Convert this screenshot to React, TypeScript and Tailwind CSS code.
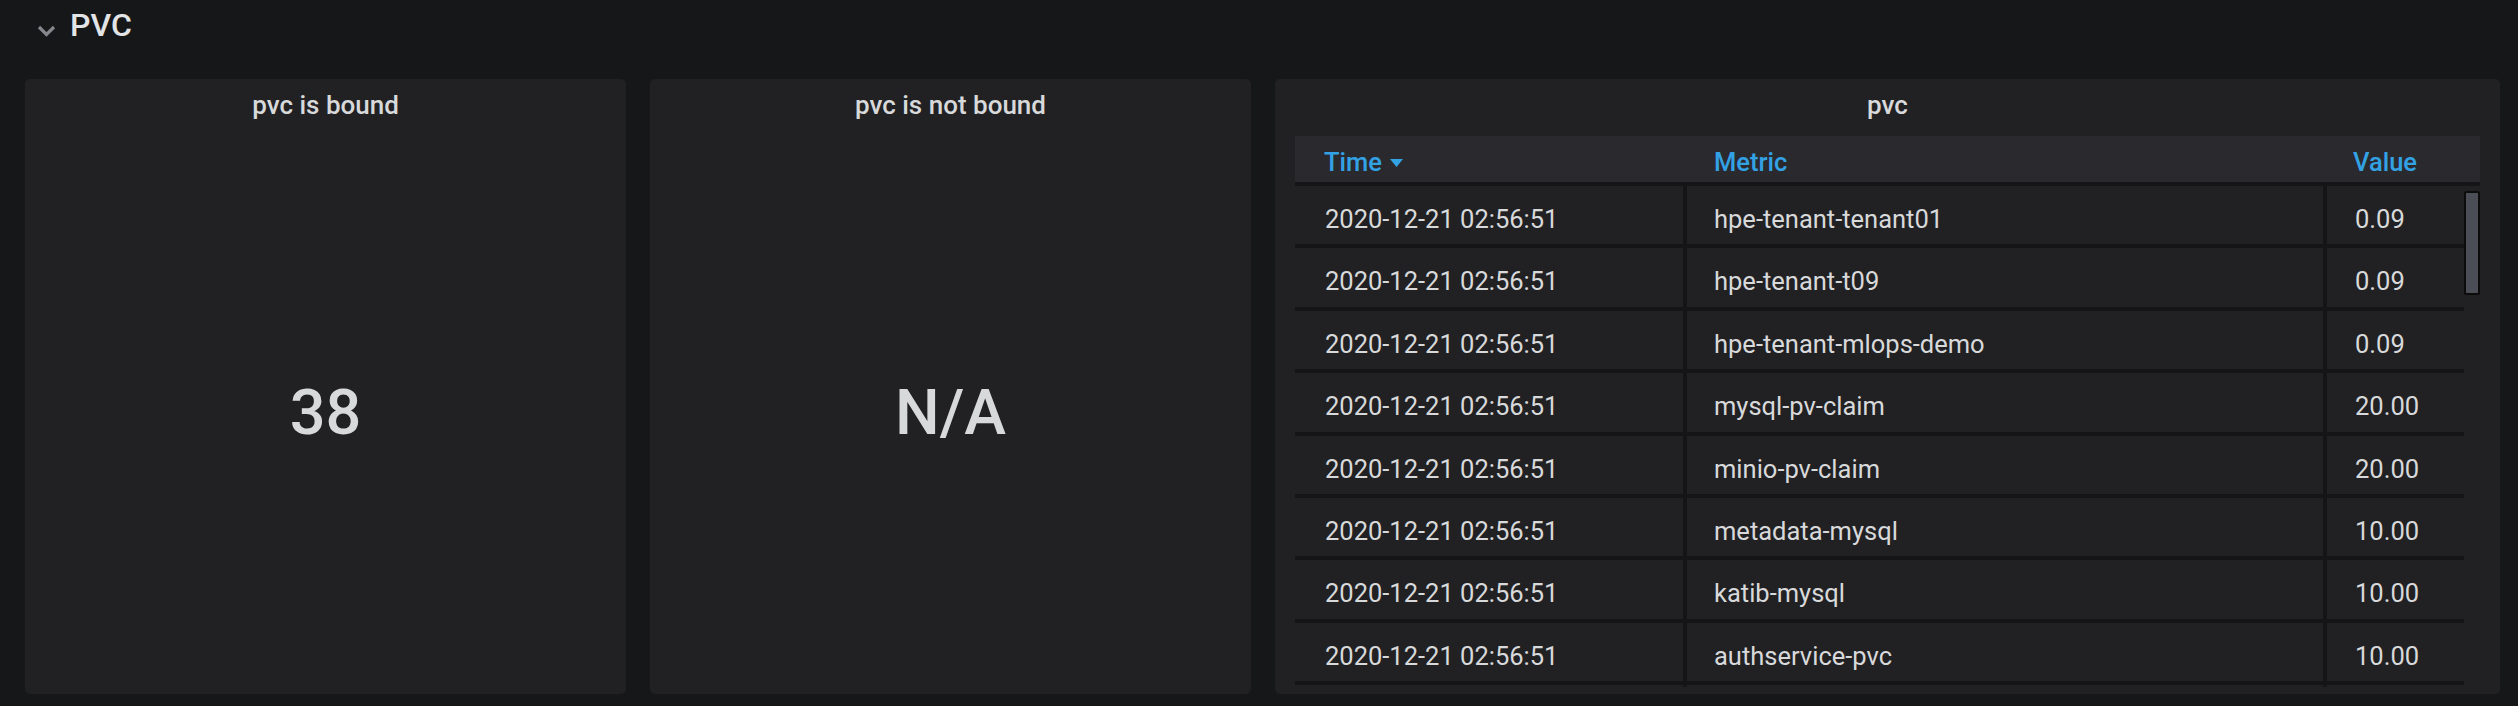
const rows = [
  { time: "2020-12-21 02:56:51", metric: "hpe-tenant-tenant01", value: "0.09" },
  { time: "2020-12-21 02:56:51", metric: "hpe-tenant-t09", value: "0.09" },
  { time: "2020-12-21 02:56:51", metric: "hpe-tenant-mlops-demo", value: "0.09" },
  { time: "2020-12-21 02:56:51", metric: "mysql-pv-claim", value: "20.00" },
  { time: "2020-12-21 02:56:51", metric: "minio-pv-claim", value: "20.00" },
  { time: "2020-12-21 02:56:51", metric: "metadata-mysql", value: "10.00" },
  { time: "2020-12-21 02:56:51", metric: "katib-mysql", value: "10.00" },
  { time: "2020-12-21 02:56:51", metric: "authservice-pvc", value: "10.00" },
  { time: "", metric: "", value: "" },
];

function PanelTitle({ title }: { title: string }) {
  return (
    <div className="h-[52px] shrink-0 flex items-center justify-center text-[26px] font-medium text-[#d8d9da] leading-none">
      {title}
    </div>
  );
}

function StatPanel({ title, value }: { title: string; value: string }) {
  return (
    <div className="bg-[#212124] rounded-[5px] flex flex-col overflow-hidden">
      <PanelTitle title={title} />
      <div className="flex-1 flex items-center justify-center text-[63px] font-medium leading-none text-[#d8d9da]">
        {value}
      </div>
    </div>
  );
}

function TablePanel() {
  return (
    <div className="bg-[#212124] rounded-[5px] flex flex-col overflow-hidden">
      <PanelTitle title="pvc" />
      <div className="mt-[5px] px-[20px] flex-1 min-h-0 flex flex-col pb-[7px]">
        <div className="h-[50px] shrink-0 flex bg-[#2a2a2e] border-b-4 border-[#151517] text-[25.5px] leading-[25px] font-medium text-[#33a2e5]">
          <div className="w-[392px] pl-[29px] pt-[14px] flex items-start">
            <span>Time</span>
            <svg width="13" height="8" viewBox="0 0 13 8" className="ml-[8px] mt-[9px]">
              <polygon points="0,0 13,0 6.5,8" fill="#33a2e5" />
            </svg>
          </div>
          <div className="w-[640px] pl-[27px] pt-[14px]">Metric</div>
          <div className="flex-1 pl-[26px] pt-[14px]">Value</div>
        </div>
        <div className="flex-1 min-h-0 flex overflow-hidden">
          <div className="w-[1169px] text-[25.5px] leading-[25px] text-[#d8d9da]">
            {rows.map((r, i) => (
              <div key={i} className="h-[62.4px] flex border-b-4 border-[#151517] bg-[#212124]">
                <div className="w-[392px] border-r-4 border-[#151517] pl-[30px] pt-[21px]">{r.time}</div>
                <div className="w-[640px] border-r-4 border-[#151517] pl-[27px] pt-[21px]">{r.metric}</div>
                <div className="flex-1 pl-[28px] pt-[21px]">{r.value}</div>
              </div>
            ))}
          </div>
          <div className="flex-1 pt-[5px] flex justify-center">
            <div className="w-[16px] h-[104px] rounded-[2px] bg-[#4c4e57] border-2 border-[#0c0c0d]" />
          </div>
        </div>
      </div>
    </div>
  );
}

export default function App() {
  return (
    <div className="w-[2518px] h-[706px] bg-[#161719] overflow-hidden font-['Roboto',sans-serif]">
      <div className="h-[79px] flex items-start pl-[37px] pt-[9px]">
        <svg width="19" height="12" viewBox="0 0 19 12" className="mt-[16px]">
          <polyline points="2,2 9.5,9.5 17,2" fill="none" stroke="#85878c" strokeWidth="3.2" />
        </svg>
        <span className="ml-[14px] text-[32px] leading-[32px] font-medium text-[#e3e4e6]">PVC</span>
      </div>
      <div className="h-[615px] grid grid-cols-[601px_601px_1fr] gap-[24px] pl-[25px] pr-[18px]">
        <StatPanel title="pvc is bound" value="38" />
        <StatPanel title="pvc is not bound" value="N/A" />
        <TablePanel />
      </div>
    </div>
  );
}
